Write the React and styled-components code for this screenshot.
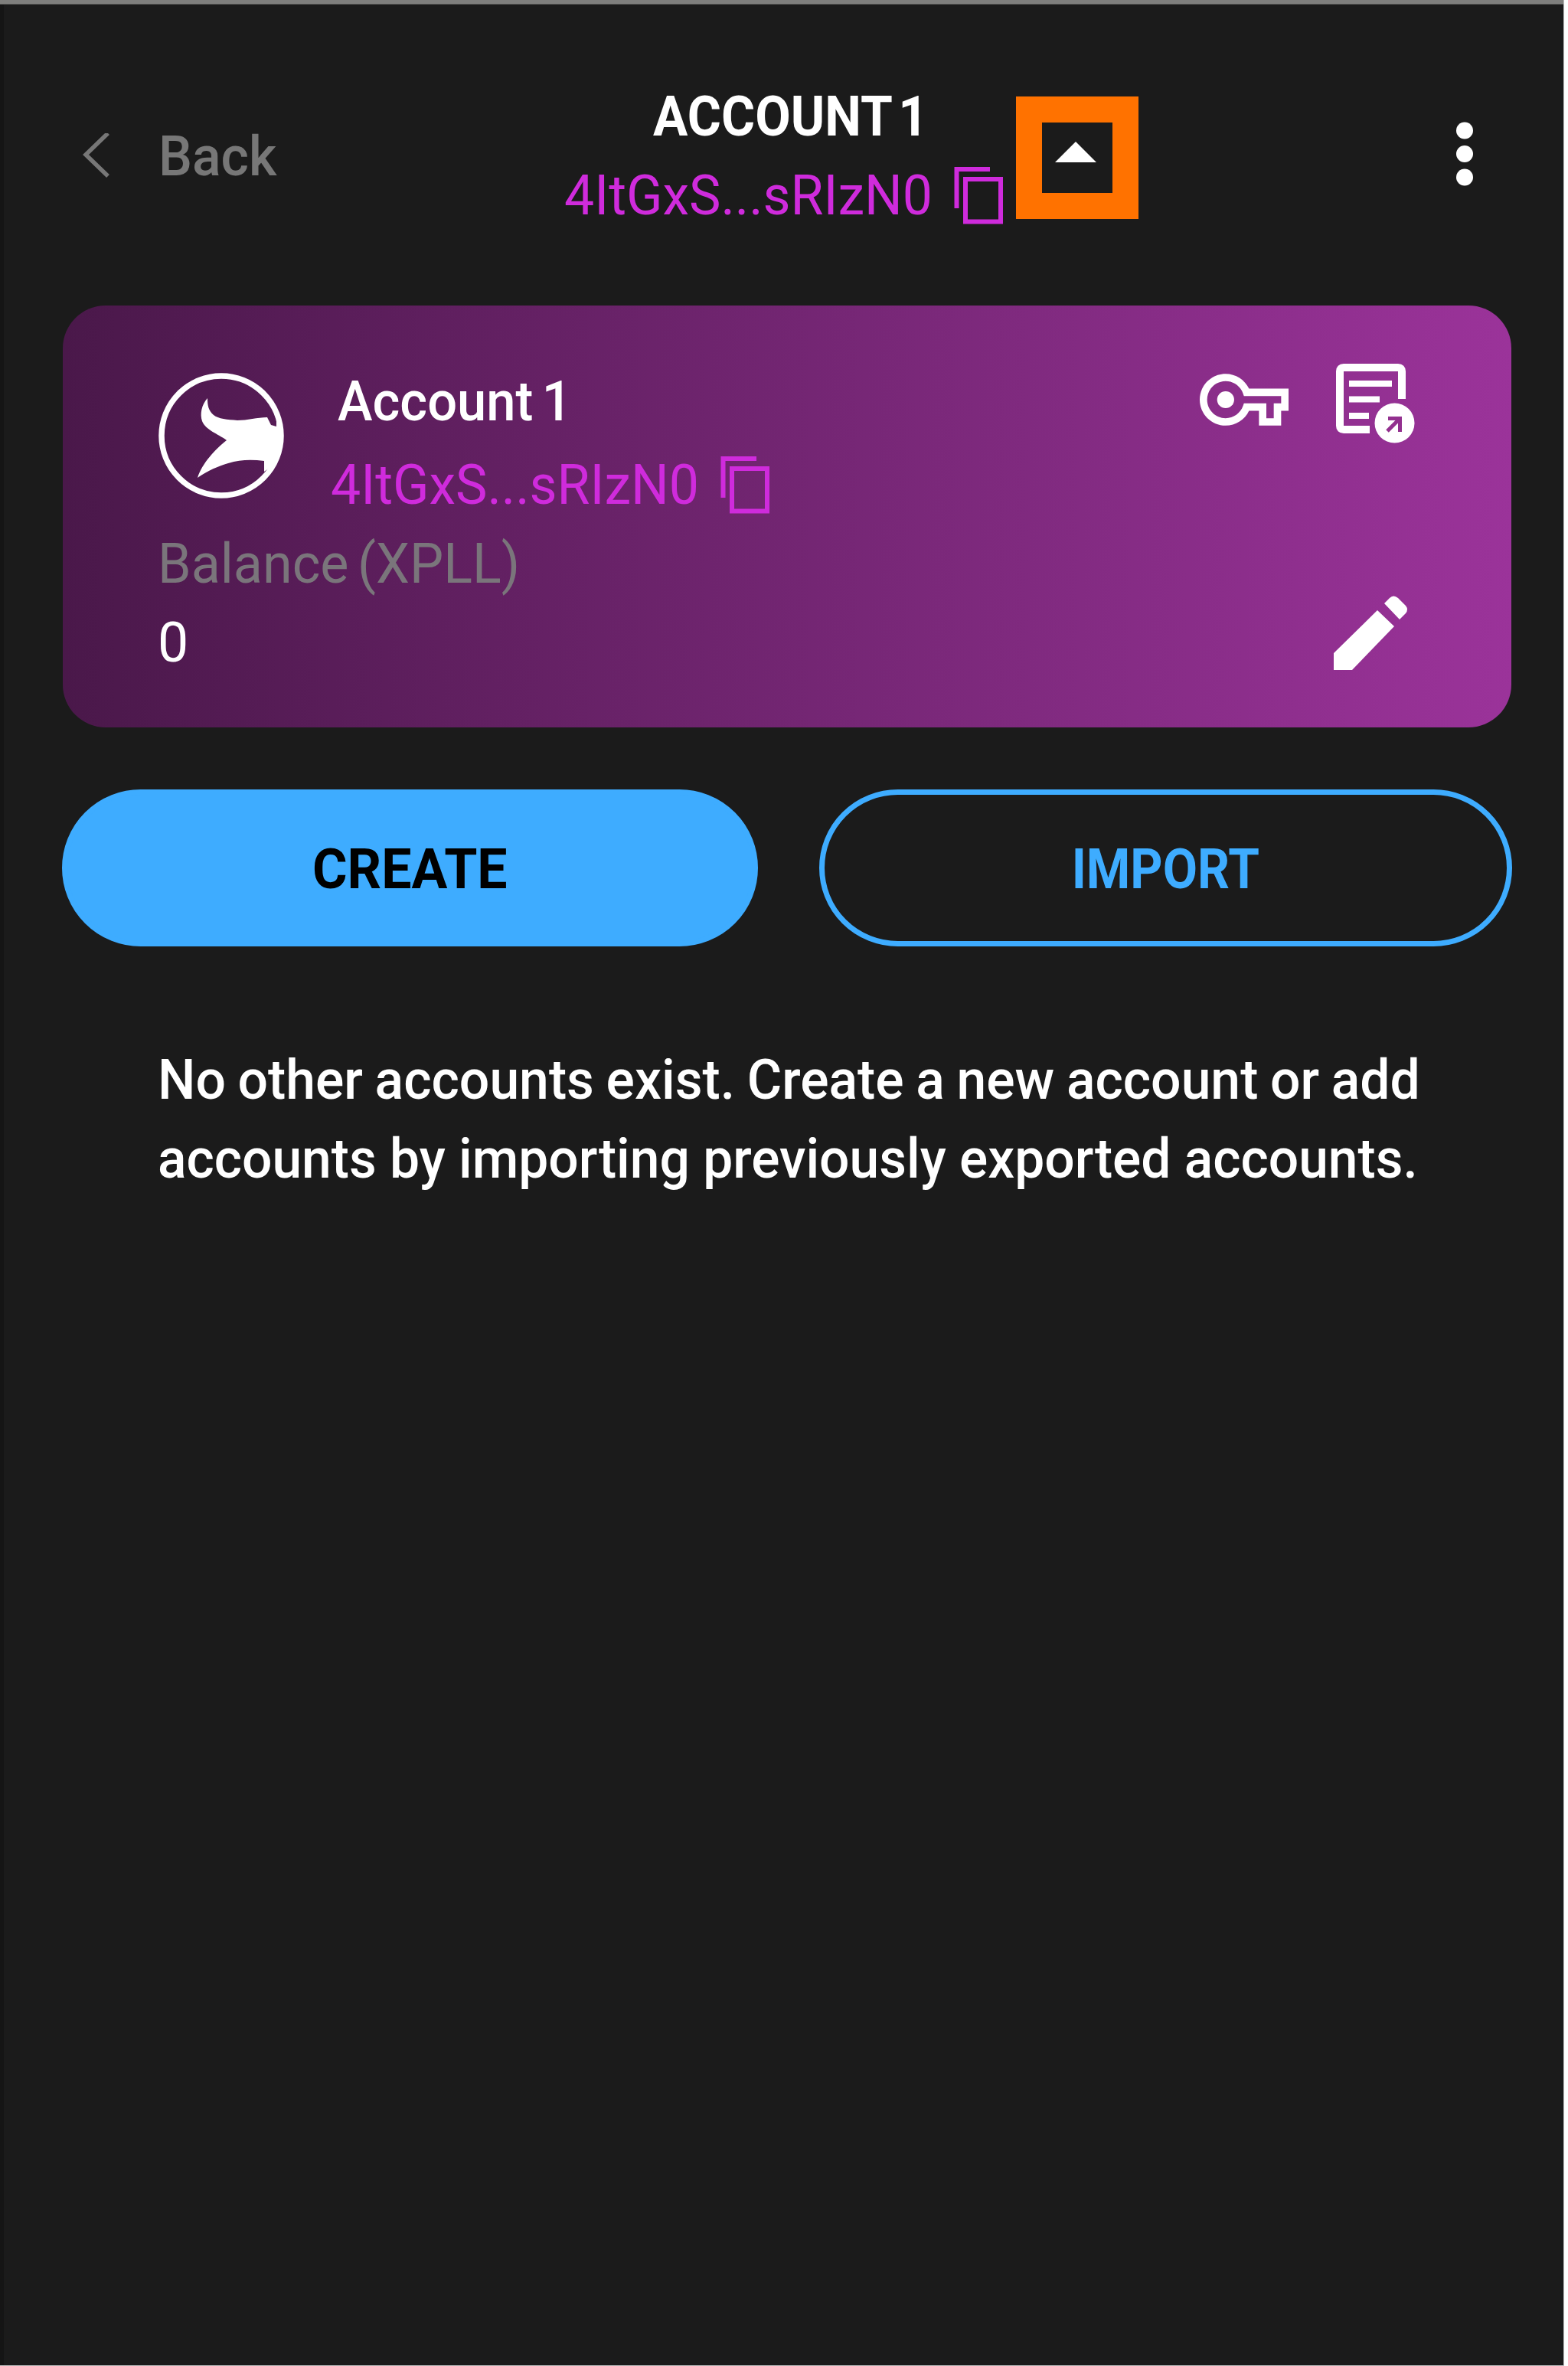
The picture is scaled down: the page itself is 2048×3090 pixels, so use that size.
import React from "react";
import styled, { createGlobalStyle } from "styled-components";

const GlobalStyle = createGlobalStyle`
  html, body { margin: 0; background: #ffffff; }
  * { box-sizing: border-box; }
  svg { display: block; flex: none; }
`;

const Screen = styled.div`
  width: 2043px;
  height: 3090px;
  display: flex;
  flex-direction: column;
  background: #1b1b1b;
  border-right: 1px solid #bdbdbd;
  border-bottom: 1px solid #bdbdbd;
  font-family: Roboto, "Liberation Sans", sans-serif;
  font-size: 73px;
  line-height: 103px;
  color: #ffffff;
`;

const TopEdge = styled.div`
  height: 6px;
  background: #7f7f7d;
  border-bottom: 1px solid #555553;
`;

const Panel = styled.main`
  flex: 1;
  border-left: 5px solid #151515;
  padding: 95px 68px 0 77px;
`;

/* Roboto set slightly condensed; $scale is the horizontal factor */
const Label = styled.div`
  width: ${(p) => p.$width || "auto"};
  font-weight: ${(p) => p.$weight || 400};
  color: ${(p) => p.$color || "inherit"};
  word-spacing: ${(p) => p.$gap || "0"};
  white-space: nowrap;
  transform: scaleX(${(p) => p.$scale || 1});
  transform-origin: ${(p) => p.$origin || "left"} center;
`;

const Header = styled.header`
  display: flex;
  align-items: center;
  height: 206px;
  padding-left: 26px;
`;

const BackLink = styled.div`
  display: flex;
  align-items: center;
  gap: 62px;
  width: 629px;
`;

const AccountInfo = styled.div`
  width: 576px;
`;

const TitleRow = styled.div`
  padding-left: 116px;
`;

const AddressRow = styled.div`
  display: flex;
  align-items: center;
  height: 103px;
  margin-top: ${(p) => p.$top || "0"};
`;

const Dropdown = styled.div`
  display: flex;
  justify-content: center;
  width: 160px;
  height: 160px;
  margin: 4px 0 0 14px;
  padding: 25px 4px 0 0;
  border: 34px solid #ff7200;
`;

const MenuButton = styled.div`
  margin-left: auto;
  padding: 0 48px 6px 0;
`;

const Card = styled.section`
  display: flex;
  justify-content: space-between;
  height: 551px;
  margin-top: 92px;
  padding: 71px 126px 74px 124px;
  border-radius: 56px;
  background: linear-gradient(90deg, #4a184a 0%, #9b339a 100%);
`;

const Summary = styled.div`
  padding-top: 3px;
`;

const Identity = styled.div`
  display: flex;
  height: 212px;
`;

const LogoSlot = styled.div`
  width: 226px;
  padding-top: 13px;
`;

const NameSlot = styled.div`
  height: 102px;
  padding-left: 9px;
`;

const Actions = styled.div`
  display: flex;
  flex-direction: column;
  justify-content: space-between;
  align-items: flex-end;
`;

const ActionRow = styled.div`
  display: flex;
  align-items: flex-start;
  gap: 56px;
`;

const KeySlot = styled.div`
  padding-top: 18px;
`;

const EditSlot = styled.div`
  padding-right: 6px;
`;

const Buttons = styled.div`
  display: grid;
  grid-template-columns: 1fr 905px;
  gap: 80px;
  margin: 81px -1px 0 -1px;
`;

const Button = styled.button`
  display: flex;
  align-items: center;
  justify-content: center;
  height: 205px;
  padding: 3px 0 0;
  border: 7px solid #3eacff;
  border-radius: 103px;
  background: ${(p) => (p.$filled ? "#3eacff" : "transparent")};
  color: ${(p) => (p.$filled ? "#000000" : "#3eacff")};
  font: inherit;
`;

const Message = styled.div`
  padding: 123px 0 0 124px;
`;

const Chevron = () => (
  <svg width="37" height="60" viewBox="0 0 37 60" fill="none" stroke="#777777" strokeWidth="5.5">
    <path d="M33 0 4 28l29 28" />
  </svg>
);

const CopyIcon = () => (
  <svg width="68" height="82" viewBox="0 0 68 82" fill="none" stroke="#cf2bdc" strokeWidth="6">
    <path d="M48 6H4.5v51" />
    <path d="M16 19h46v55.5H16z" />
  </svg>
);

const CaretUp = () => (
  <svg width="54" height="27" viewBox="0 0 54 27" fill="#ffffff">
    <path d="M27 0 54 27H0z" />
  </svg>
);

const Dots = () => (
  <svg width="26" height="84" viewBox="0 0 26 84" fill="#ffffff">
    <circle cx="13" cy="11.5" r="11" />
    <circle cx="13" cy="42" r="11" />
    <circle cx="13" cy="72.5" r="11" />
  </svg>
);

const Logo = () => (
  <svg width="166" height="166" viewBox="0 0 166 166">
    <circle cx="83" cy="83" r="78" fill="none" stroke="#ffffff" strokeWidth="7.5" />
    <path
      fill="#ffffff"
      d="M65 34C57 43 55 55 58 64C63 76 78 80 90 89C75 101 58 119 52 138C66 128 79 123 92 119C108 114 123 114 139 116V130L150 122C162 100 163 76 155 60V71L148 69L143 59C130 59 117 63 104 63C91 62 79 61 73 56C66 50 65 43 65 34Z"
    />
  </svg>
);

const KeyIcon = () => (
  <svg width="116" height="68" viewBox="0 5 24 14" fill="#ffffff">
    <path d="M22 19h-6v-4h-2.68c-1.14 2.42-3.6 4-6.32 4-3.86 0-7-3.14-7-7s3.14-7 7-7c2.72 0 5.17 1.58 6.32 4H24v6h-2v4zm-4-2h2v-4h2v-2H11.94l-.23-.67C11.01 8.34 9.11 7 7 7c-2.76 0-5 2.24-5 5s2.24 5 5 5c2.11 0 4.01-1.34 4.71-3.33l.23-.67H18v4z" />
    <circle cx="7" cy="12" r="2.3" />
  </svg>
);

const DetailsIcon = () => (
  <svg width="109" height="110" viewBox="0 0 109 110" fill="none" stroke="#ffffff">
    <path strokeWidth="10" d="M50 91H16q-5 0-5-5V15q0-5 5-5h71q5 0 5 5v36" />
    <path strokeWidth="8" d="M23 31h56M23 51.5h40M23 73h26" />
    <circle cx="82.5" cy="82.5" r="26" fill="#ffffff" stroke="none" />
    <path stroke="#93308f" strokeWidth="5" d="M73 93l15-15M74 76.500h15.500V94" />
  </svg>
);

const EditIcon = () => (
  <svg width="103" height="98" viewBox="0 0 103 98" fill="#ffffff">
    <path d="M3 97V75L60 19 82 40 27 97zM69 10l7-7q5-5 11 0l10 10q4 5 0 10l-8 8z" />
  </svg>
);

const Address = () => (
  <>
    <Label $width="508px" $scale={0.955} $color="#cf2bdc">
      4ItGxS...sRIzN0
    </Label>
    <CopyIcon />
  </>
);

export default function App() {
  return (
    <>
      <GlobalStyle />
      <Screen>
        <TopEdge />
        <Panel>
          <Header>
            <BackLink>
              <Chevron />
              <Label $weight={500} $color="#777777" $scale={0.955}>
                Back
              </Label>
            </BackLink>
            <AccountInfo>
              <TitleRow>
                <Label $weight={700} $scale={0.925} $gap="-8px">
                  ACCOUNT 1
                </Label>
              </TitleRow>
              <AddressRow>
                <Address />
              </AddressRow>
            </AccountInfo>
            <Dropdown>
              <CaretUp />
            </Dropdown>
            <MenuButton>
              <Dots />
            </MenuButton>
          </Header>

          <Card>
            <Summary>
              <Identity>
                <LogoSlot>
                  <Logo />
                </LogoSlot>
                <div>
                  <NameSlot>
                    <Label $weight={500} $scale={0.94} $gap="-6px">
                      Account 1
                    </Label>
                  </NameSlot>
                  <AddressRow $top="7px">
                    <Address />
                  </AddressRow>
                </div>
              </Identity>
              <Label $color="#7a757b" $scale={0.96} $gap="-6px">
                Balance (XPLL)
              </Label>
              <Label $scale={0.98}>
                0
              </Label>
            </Summary>
            <Actions>
              <ActionRow>
                <KeySlot>
                  <KeyIcon />
                </KeySlot>
                <DetailsIcon />
              </ActionRow>
              <EditSlot>
                <EditIcon />
              </EditSlot>
            </Actions>
          </Card>

          <Buttons>
            <Button $filled>
              <Label $weight={700} $scale={0.955} $origin="center">
                CREATE
              </Label>
            </Button>
            <Button>
              <Label $weight={700} $scale={0.9} $origin="center">
                IMPORT
              </Label>
            </Button>
          </Buttons>

          <Message>
            <Label $weight={500} $scale={0.954} $gap="-1.7px">
              No other accounts exist. Create a new account or add
            </Label>
            <Label $weight={500} $scale={0.952}>
              accounts by importing previously exported accounts.
            </Label>
          </Message>
        </Panel>
      </Screen>
    </>
  );
}
